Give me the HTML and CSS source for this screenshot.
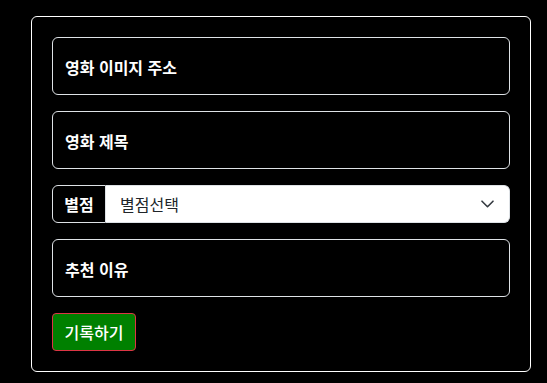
FILE: index.html
```html
<!DOCTYPE html>
<html lang="ko">
<head>
<meta charset="utf-8">
<link rel="stylesheet" href="styles.css">
</head>
<body>
<form class="card">
  <div class="field"><span class="field-label">영화 이미지 주소</span></div>
  <div class="field"><span class="field-label">영화 제목</span></div>
  <div class="group">
    <span class="group-label">별점</span>
    <div class="select">
      <span class="select-text">별점선택</span>
      <svg class="chev" width="13" height="8" viewBox="0 0 13 8"><path d="M1 1.2l5.5 5.5 5.5-5.5" fill="none" stroke="#343a40" stroke-width="1.6" stroke-linecap="round" stroke-linejoin="round"/></svg>
    </div>
  </div>
  <div class="field"><span class="field-label">추천 이유</span></div>
  <button type="button" class="btn">기록하기</button>
</form>
</body>
</html>
```
FILE: styles.css
```css
html, body {
  margin: 0;
  padding: 0;
  background: #000;
}
body {
  padding: 16px 0 0 31px;
  font-family: "Noto Sans CJK KR", "Noto Sans", sans-serif;
  font-size: 16px;
}
.card {
  box-sizing: border-box;
  width: 500px;
  padding: 20px;
  border: 1px solid #fff;
  border-radius: 6px;
  display: flex;
  flex-direction: column;
  gap: 16px;
}
.field {
  box-sizing: border-box;
  height: 58px;
  border: 1px solid #dee2e6;
  border-radius: 6px;
  display: flex;
  align-items: center;
  padding: 2px 12px 0;
}
.field-label {
  color: #fff;
  font-weight: 700;
  font-size: 16px;
}
.group {
  display: flex;
  height: 38px;
}
.group-label {
  box-sizing: border-box;
  width: 54px;
  border: 1px solid #dee2e6;
  border-radius: 6px 0 0 6px;
  color: #fff;
  font-weight: 700;
  display: flex;
  align-items: center;
  justify-content: center;
}
.select {
  flex: 1;
  box-sizing: border-box;
  background: #fff;
  border: 1px solid #dee2e6;
  border-left: none;
  border-radius: 0 6px 6px 0;
  display: flex;
  align-items: center;
  justify-content: space-between;
  padding: 0 15px 0 14px;
  color: #212529;
}
.chev {
  display: block;
}
.btn {
  align-self: flex-start;
  height: 38px;
  width: 84px;
  background: #008000;
  border: 1px solid #dc3545;
  border-radius: 4px;
  color: #fff;
  font-family: inherit;
  font-size: 16px;
  font-weight: 500;
  padding: 0;
}
```
